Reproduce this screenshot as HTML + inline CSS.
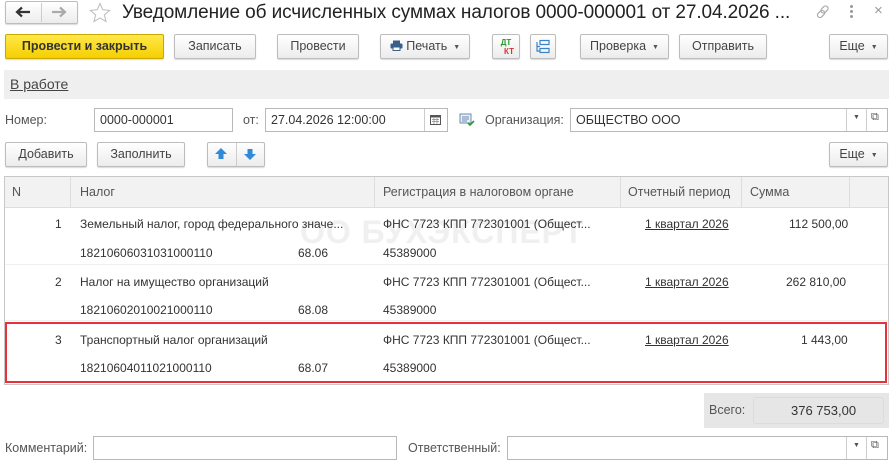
<!DOCTYPE html>
<html><head><meta charset="utf-8"><style>
*{box-sizing:border-box;margin:0;padding:0}
body{width:893px;height:464px;background:#fff;font-family:"Liberation Sans",Arial,sans-serif;font-size:12px;color:#333;position:relative;overflow:hidden}
.a{position:absolute;white-space:nowrap}
.btn{position:absolute;height:25px;border:1px solid #bdbdbd;border-radius:2px;background:linear-gradient(#fff,#ececec);box-shadow:0 1px 1px rgba(0,0,0,.15);text-align:center;line-height:23px;font-size:12.5px;color:#444}
.inp{position:absolute;height:24px;border:1px solid #b8b8b8;background:#fff;line-height:22px;padding-left:5px;font-size:12.5px;color:#333}
.lbl{position:absolute;color:#555;font-size:12.5px;white-space:nowrap}
.dd{font-size:7px;color:#555;margin-left:6px;vertical-align:1px}
.u{text-decoration:underline}
</style></head><body>
<!-- title bar -->
<div class="btn" style="left:5px;top:1px;width:73px;height:23px"></div>
<div class="a" style="left:41px;top:3px;width:1px;height:19px;background:#ccc"></div>
<svg class="a" style="left:15px;top:6px" width="16" height="12" viewBox="0 0 16 12"><path d="M15 6H3M7 1.5L2 6l5 4.5" fill="none" stroke="#333" stroke-width="2.2"/></svg>
<svg class="a" style="left:51px;top:6px" width="16" height="12" viewBox="0 0 16 12"><path d="M1 6h12M9 1.5L14 6l-5 4.5" fill="none" stroke="#aaa" stroke-width="2.2"/></svg>
<svg class="a" style="left:89px;top:2px" width="22" height="22" viewBox="0 0 22 22"><path d="M11 1.5l2.8 6.3 6.8.6-5.2 4.5 1.6 6.7L11 16l-6 3.6 1.6-6.7-5.2-4.5 6.8-.6z" fill="none" stroke="#bbb" stroke-width="1"/></svg>
<div class="a" style="left:122px;top:2px;font-size:19px;color:#222;letter-spacing:-0.1px">Уведомление об исчисленных суммах налогов 0000-000001 от 27.04.2026 ...</div>
<svg class="a" style="left:815px;top:4px" width="16" height="16" viewBox="0 0 16 16"><g fill="none" stroke="#aaa" stroke-width="1.2"><rect x="7" y="1.5" width="5" height="8" rx="2.5" transform="rotate(45 9.5 5.5)"/><rect x="3.5" y="6" width="5" height="8" rx="2.5" transform="rotate(45 6 10)"/></g></svg>
<div class="a" style="left:850px;top:5px;width:3px;height:3px;background:#999;border-radius:50%;box-shadow:0 5px 0 #999,0 10px 0 #999"></div>
<div class="a" style="left:874px;top:2px;font-size:15px;color:#999">×</div>
<!-- toolbar -->
<div class="btn" style="left:5px;top:34px;width:159px;background:linear-gradient(#ffe84a,#f5cf00);border-color:#c9a800;color:#333;font-weight:bold">Провести и закрыть</div>
<div class="btn" style="left:174px;top:34px;width:82px">Записать</div>
<div class="btn" style="left:277px;top:34px;width:82px">Провести</div>
<div class="btn" style="left:380px;top:34px;width:90px"><svg width="13" height="11" viewBox="0 0 13 11" style="vertical-align:-1px"><rect x="3" y="0.5" width="7" height="3" fill="#3a5f8a"/><rect x="0.5" y="3.5" width="12" height="5" rx="1" fill="#3a5f8a"/><rect x="3" y="7" width="7" height="3.5" fill="#fff" stroke="#3a5f8a"/></svg> Печать<span class="dd">▼</span></div>
<div class="btn" style="left:492px;top:34px;width:28px;font-size:8px;line-height:9px;padding-top:3px;font-weight:bold"><span style="color:#2a9a2a">ДТ</span><br><span style="color:#e03030;margin-left:6px">КТ</span></div>
<div class="btn" style="left:530px;top:34px;width:26px"><svg width="16" height="16" viewBox="0 0 16 16" style="margin-top:4px"><g fill="none" stroke="#3b83c7" stroke-width="1.2"><rect x="5" y="1.5" width="9" height="4"/><rect x="5" y="9.5" width="9" height="4"/><path d="M2 3v9h3M2 7.5h3"/></g></svg></div>
<div class="btn" style="left:580px;top:34px;width:89px">Проверка<span class="dd">▼</span></div>
<div class="btn" style="left:679px;top:34px;width:88px">Отправить</div>
<div class="btn" style="left:829px;top:34px;width:59px">Еще<span class="dd">▼</span></div>
<!-- status band -->
<div class="a" style="left:4px;top:70px;width:885px;height:29px;background:#efefef"></div>
<div class="a u" style="left:10px;top:76px;font-size:14px;color:#444">В работе</div>
<!-- fields -->
<div class="lbl" style="left:5px;top:113px">Номер:</div>
<div class="inp" style="left:94px;top:108px;width:139px">0000-000001</div>
<div class="lbl" style="left:243px;top:113px">от:</div>
<div class="inp" style="left:265px;top:108px;width:183px">27.04.2026 12:00:00</div>
<div class="a" style="left:424px;top:109px;width:1px;height:22px;background:#ccc"></div>
<svg class="a" style="left:430px;top:114px" width="11" height="11" viewBox="0 0 11 11"><rect x="0.5" y="1.5" width="10" height="9" fill="none" stroke="#555"/><rect x="0.5" y="1.5" width="10" height="2" fill="#555"/><path d="M2 5.5h7M2 7.5h7M4 4v6M7 4v6" stroke="#888" stroke-width=".7"/></svg>
<svg class="a" style="left:459px;top:113px" width="16" height="14" viewBox="0 0 16 14"><rect x="1" y="1" width="11" height="9" fill="#e8eef5" stroke="#6a8fb5"/><path d="M3 4h7M3 6h7M3 8h5" stroke="#6a8fb5"/><path d="M9 10l2 2 4-4" stroke="#2a9a2a" stroke-width="1.6" fill="none"/></svg>
<div class="lbl" style="left:485px;top:113px">Организация:</div>
<div class="inp" style="left:570px;top:108px;width:318px">ОБЩЕСТВО ООО</div>
<div class="a" style="left:846px;top:109px;width:1px;height:22px;background:#ccc"></div>
<div class="a" style="left:866px;top:109px;width:1px;height:22px;background:#ccc"></div>
<div class="a" style="left:853px;top:114px;font-size:7px;color:#555">▼</div>
<div class="a" style="left:871px;top:111px;font-size:11px;color:#555">⧉</div>
<!-- table toolbar -->
<div class="btn" style="left:5px;top:142px;width:82px">Добавить</div>
<div class="btn" style="left:97px;top:142px;width:88px">Заполнить</div>
<div class="btn" style="left:207px;top:142px;width:58px"></div>
<div class="a" style="left:236px;top:143px;width:1px;height:23px;background:#ccc"></div>
<svg class="a" style="left:214px;top:147px" width="14" height="14" viewBox="0 0 14 14"><path d="M7 1l6 6H9.5v5h-5V7H1z" fill="#2f8ad8"/></svg>
<svg class="a" style="left:243px;top:147px" width="14" height="14" viewBox="0 0 14 14"><path d="M7 13l6-6H9.5V2h-5v5H1z" fill="#2f8ad8"/></svg>
<div class="btn" style="left:829px;top:142px;width:59px">Еще<span class="dd">▼</span></div>
<!-- table -->
<div class="a" style="left:4px;top:176px;width:885px;height:209px;border:1px solid #c8c8c8"></div>
<div class="a" style="left:5px;top:177px;width:883px;height:31px;background:#f2f2f2;border-bottom:1px solid #ddd"></div>
<div class="a" style="left:70px;top:177px;width:1px;height:31px;background:#ddd"></div>
<div class="a" style="left:374px;top:177px;width:1px;height:31px;background:#ddd"></div>
<div class="a" style="left:620px;top:177px;width:1px;height:31px;background:#ddd"></div>
<div class="a" style="left:741px;top:177px;width:1px;height:31px;background:#ddd"></div>
<div class="a" style="left:849px;top:177px;width:1px;height:31px;background:#ddd"></div>
<div class="lbl" style="left:12px;top:185px">N</div>
<div class="lbl" style="left:80px;top:185px">Налог</div>
<div class="lbl" style="left:383px;top:185px">Регистрация в налоговом органе</div>
<div class="lbl" style="left:628px;top:185px">Отчетный период</div>
<div class="lbl" style="left:750px;top:185px">Сумма</div>
<div class="a" style="left:300px;top:214px;font-size:32px;font-weight:bold;color:#f0f0f0;letter-spacing:1px">ОО БУХЭКСПЕРТ</div>
<div class="a" style="left:5px;top:264px;width:883px;height:1px;background:#f0f0f0"></div>
<div class="a" style="left:5px;top:320px;width:883px;height:1px;background:#f0f0f0"></div>
<!-- row1 -->
<div class="a" style="left:55px;top:217px">1</div>
<div class="a" style="left:80px;top:217px">Земельный налог, город федерального значе...</div>
<div class="a" style="left:383px;top:217px">ФНС 7723 КПП 772301001 (Общест...</div>
<div class="a u" style="left:645px;top:217px">1 квартал 2026</div>
<div class="a" style="left:789px;top:217px">112 500,00</div>
<div class="a" style="left:80px;top:246px">18210606031031000110</div>
<div class="a" style="left:298px;top:246px">68.06</div>
<div class="a" style="left:383px;top:246px">45389000</div>
<!-- row2 -->
<div class="a" style="left:55px;top:275px">2</div>
<div class="a" style="left:80px;top:275px">Налог на имущество организаций</div>
<div class="a" style="left:383px;top:275px">ФНС 7723 КПП 772301001 (Общест...</div>
<div class="a u" style="left:645px;top:275px">1 квартал 2026</div>
<div class="a" style="left:786px;top:275px">262 810,00</div>
<div class="a" style="left:80px;top:303px">18210602010021000110</div>
<div class="a" style="left:298px;top:303px">68.08</div>
<div class="a" style="left:383px;top:303px">45389000</div>
<!-- row3 -->
<div class="a" style="left:55px;top:333px">3</div>
<div class="a" style="left:80px;top:333px">Транспортный налог организаций</div>
<div class="a" style="left:383px;top:333px">ФНС 7723 КПП 772301001 (Общест...</div>
<div class="a u" style="left:645px;top:333px">1 квартал 2026</div>
<div class="a" style="left:801px;top:333px">1 443,00</div>
<div class="a" style="left:80px;top:361px">18210604011021000110</div>
<div class="a" style="left:298px;top:361px">68.07</div>
<div class="a" style="left:383px;top:361px">45389000</div>
<div class="a" style="left:5px;top:322px;width:882px;height:61px;border:2px solid #e8323a"></div>
<!-- total -->
<div class="a" style="left:704px;top:393px;width:185px;height:35px;background:#e6e6e6"></div>
<div class="a" style="left:753px;top:397px;width:131px;height:27px;border:1px solid #dcdcdc;border-radius:3px"></div>
<div class="lbl" style="left:709px;top:403px">Всего:</div>
<div class="a" style="left:791px;top:403px;font-size:13px">376 753,00</div>
<!-- bottom -->
<div class="lbl" style="left:5px;top:441px">Комментарий:</div>
<div class="inp" style="left:93px;top:436px;width:304px"></div>
<div class="lbl" style="left:408px;top:441px">Ответственный:</div>
<div class="inp" style="left:507px;top:436px;width:381px"></div>
<div class="a" style="left:846px;top:437px;width:1px;height:22px;background:#ccc"></div>
<div class="a" style="left:866px;top:437px;width:1px;height:22px;background:#ccc"></div>
<div class="a" style="left:853px;top:442px;font-size:7px;color:#555">▼</div>
<div class="a" style="left:871px;top:439px;font-size:11px;color:#555">⧉</div>
</body></html>
